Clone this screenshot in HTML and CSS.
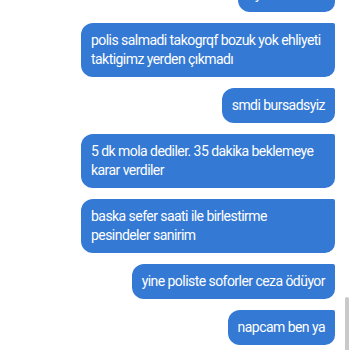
FILE: index.html
```html
<!DOCTYPE html>
<html lang="tr">
<head>
    <meta charset="UTF-8">
    <meta name="viewport" content="width=device-width, initial-scale=1.0">
    <title>Sohbet</title>
    <link rel="stylesheet" href="styles.css">
</head>
<body>

<div class="chat">
    <!-- Giden mesajlar -->
    <div class="msg msg--cut">ayarlanmadi</div>
    <div class="msg">polis salmadi takogrqf bozuk yok ehliyeti taktigimz yerden çıkmadı</div>
    <div class="msg">smdi bursadsyiz</div>
    <div class="msg">5 dk mola dediler. 35 dakika beklemeye karar verdiler</div>
    <div class="msg">baska sefer saati ile birlestirme pesindeler sanirim</div>
    <div class="msg">yine poliste soforler ceza ödüyor</div>
    <div class="msg">napcam ben ya</div>
</div>

<div class="scroll-thumb"></div>

</body>
</html>
```

FILE: styles.css
```css
/* Sohbet ekrani */
body { margin: 0; background: #fff; font-family: Roboto, "Noto Sans", sans-serif; overflow: hidden; }
.chat { display: flex; flex-direction: column; align-items: flex-end; gap: 11px; padding: 0 15px 0 0; margin-top: -23px; }
.msg { max-width: 234px; padding: 8px 10px; background: #3479d3; color: #fff; font-size: 14px; line-height: 19px; letter-spacing: -0.55px; border-radius: 12px 2px 10px 12px; }
.msg--cut { min-width: 77px; }
.scroll-thumb { position: fixed; right: 1px; top: 297px; width: 4px; height: 60px; background: #c9c9c9; border-radius: 2px; }
```
